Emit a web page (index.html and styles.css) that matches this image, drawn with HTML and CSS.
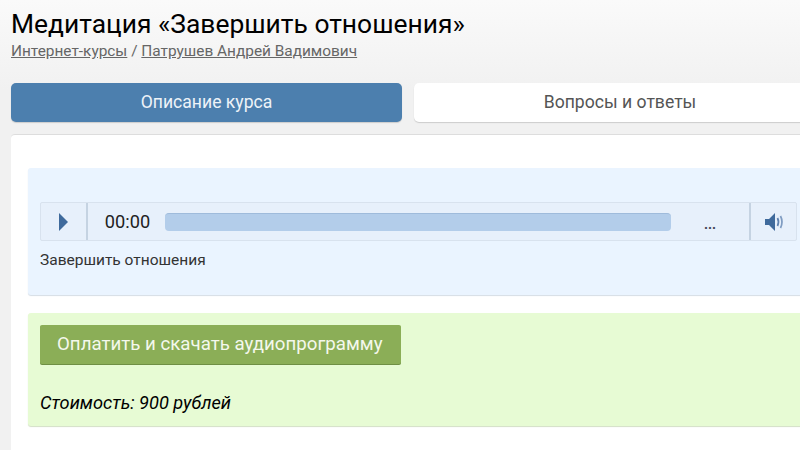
FILE: index.html
```html
<!DOCTYPE html>
<html>
<head>
  <title>Медитация «Завершить отношения»</title>
  <link rel="stylesheet" href="styles.css">
</head>
<body>
  <div class="page">
    <h1>Медитация «Завершить отношения»</h1>
    <div class="crumbs"><a href="#">Интернет-курсы</a> / <a href="#">Патрушев Андрей Вадимович</a></div>

    <div class="tabs">
      <a class="tab active" href="#">Описание курса</a>
      <a class="tab" href="#">Вопросы и ответы</a>
    </div>

    <div class="card">
      <div class="audio-box">
        <div class="player">
          <div class="play-btn">
            <svg width="9" height="18" viewBox="0 0 9 18"><path d="M0 0L9 9L0 18Z" fill="#3f6a9c"/></svg>
          </div>
          <div class="time">00:00</div>
          <div class="progress"></div>
          <div class="dots">...</div>
          <div class="volume">
            <svg width="20" height="18" viewBox="0 0 20 18">
              <path d="M0 6H4L10 0V18L4 12H0Z" fill="#3f6a9c"/>
              <path d="M12.5 5Q14.5 9 12.5 13" fill="none" stroke="#5f82b0" stroke-width="1.7"/>
              <path d="M15.5 3Q18.5 9 15.5 15" fill="none" stroke="#7f9cc2" stroke-width="1.7"/>
            </svg>
          </div>
        </div>
        <div class="track-name">Завершить отношения</div>
      </div>

      <div class="buy-box">
        <a class="buy-btn" href="#">Оплатить и скачать аудиопрограмму</a>
        <p class="price">Стоимость: 900 рублей</p>
      </div>
    </div>
  </div>
</body>
</html>
```

FILE: styles.css
```css
html, body {
  margin: 0;
  padding: 0;
  height: 450px;
  overflow: hidden;
}

body {
  background: linear-gradient(#fafafa, #f1f1f1 90px);
  color: #000;
  font-family: Roboto, "Liberation Sans", sans-serif;
}

.page {
  width: 815px;
  height: 440px;
  padding: 10px 0 0 11px;
  overflow: hidden;
}

h1 {
  margin: 0;
  font-size: 26.4px;
  font-weight: 400;
  line-height: 28px;
}

/* Breadcrumbs */
.crumbs {
  margin-top: 3px;
  font-size: 15.4px;
  line-height: 20px;
  color: #666;
}

.crumbs a {
  color: #666;
}

/* Tabs */
.tabs {
  display: grid;
  grid-template-columns: 391px 1fr;
  gap: 12px;
  margin-top: 22px;
}

.tab {
  height: 39px;
  line-height: 39px;
  border-radius: 5px;
  background-color: #fff;
  box-shadow: 0 1px 1px #ccc;
  color: #555;
  font-size: 17.6px;
  text-align: center;
  text-decoration: none;
}

.tab.active {
  background-color: #4c7fae;
  color: #eef3f8;
}

/* Main card */
.card {
  margin-top: 12px;
  padding: 33px 17px 0;
  height: 400px;
  box-sizing: border-box;
  border-top: 1px solid #ddd;
  border-radius: 4px 0 0 0;
  background-color: #fff;
}

.audio-box {
  height: 127px;
  padding: 34px 12px 0;
  box-sizing: border-box;
  border-radius: 3px;
  background-color: #eaf4ff;
  box-shadow: 0 1px 1px #d5dde5;
}

.player {
  display: flex;
  align-items: center;
  height: 39px;
  box-sizing: border-box;
  border: 1px solid #d8e2ee;
  border-radius: 2px;
  background-color: #e7f0fb;
}

.play-btn {
  display: flex;
  align-items: center;
  justify-content: center;
  width: 47px;
  height: 100%;
  box-sizing: border-box;
  border-right: 2px solid #c5d3e2;
}

.time {
  width: 77px;
  padding-left: 2px;
  box-sizing: border-box;
  text-align: center;
  font-size: 18.2px;
  color: #222;
}

.progress {
  width: 506px;
  height: 18px;
  box-sizing: border-box;
  border-top: 1px solid #9fbbdb;
  border-radius: 4px;
  background-color: #b3cdea;
}

.dots {
  flex: 1;
  text-align: center;
  font-size: 14px;
  font-weight: 700;
  color: #445;
  padding-top: 4px;
}

.volume {
  display: flex;
  align-items: center;
  justify-content: center;
  width: 47px;
  height: 100%;
  padding-left: 3px;
  box-sizing: border-box;
  border-left: 2px solid #c5d3e2;
}

.track-name {
  margin-top: 9px;
  font-size: 15.5px;
  line-height: 20px;
  color: #333;
}

/* Payment block */
.buy-box {
  height: 113px;
  margin-top: 18px;
  padding: 12px;
  box-sizing: border-box;
  border-radius: 3px;
  background-color: #e7fbd4;
  box-shadow: 0 1px 1px #d3dfc6;
}

.buy-btn {
  display: inline-block;
  height: 39px;
  line-height: 39px;
  padding: 0 18px 0 17px;
  border-radius: 2px;
  background-color: #8bae57;
  box-shadow: 0 1px 0 #6f8f44;
  color: #f4f8ec;
  font-size: 18.7px;
  text-decoration: none;
}

.price {
  margin: 27px 0 0;
  font-size: 18.2px;
  font-style: italic;
  line-height: 24px;
}
```
